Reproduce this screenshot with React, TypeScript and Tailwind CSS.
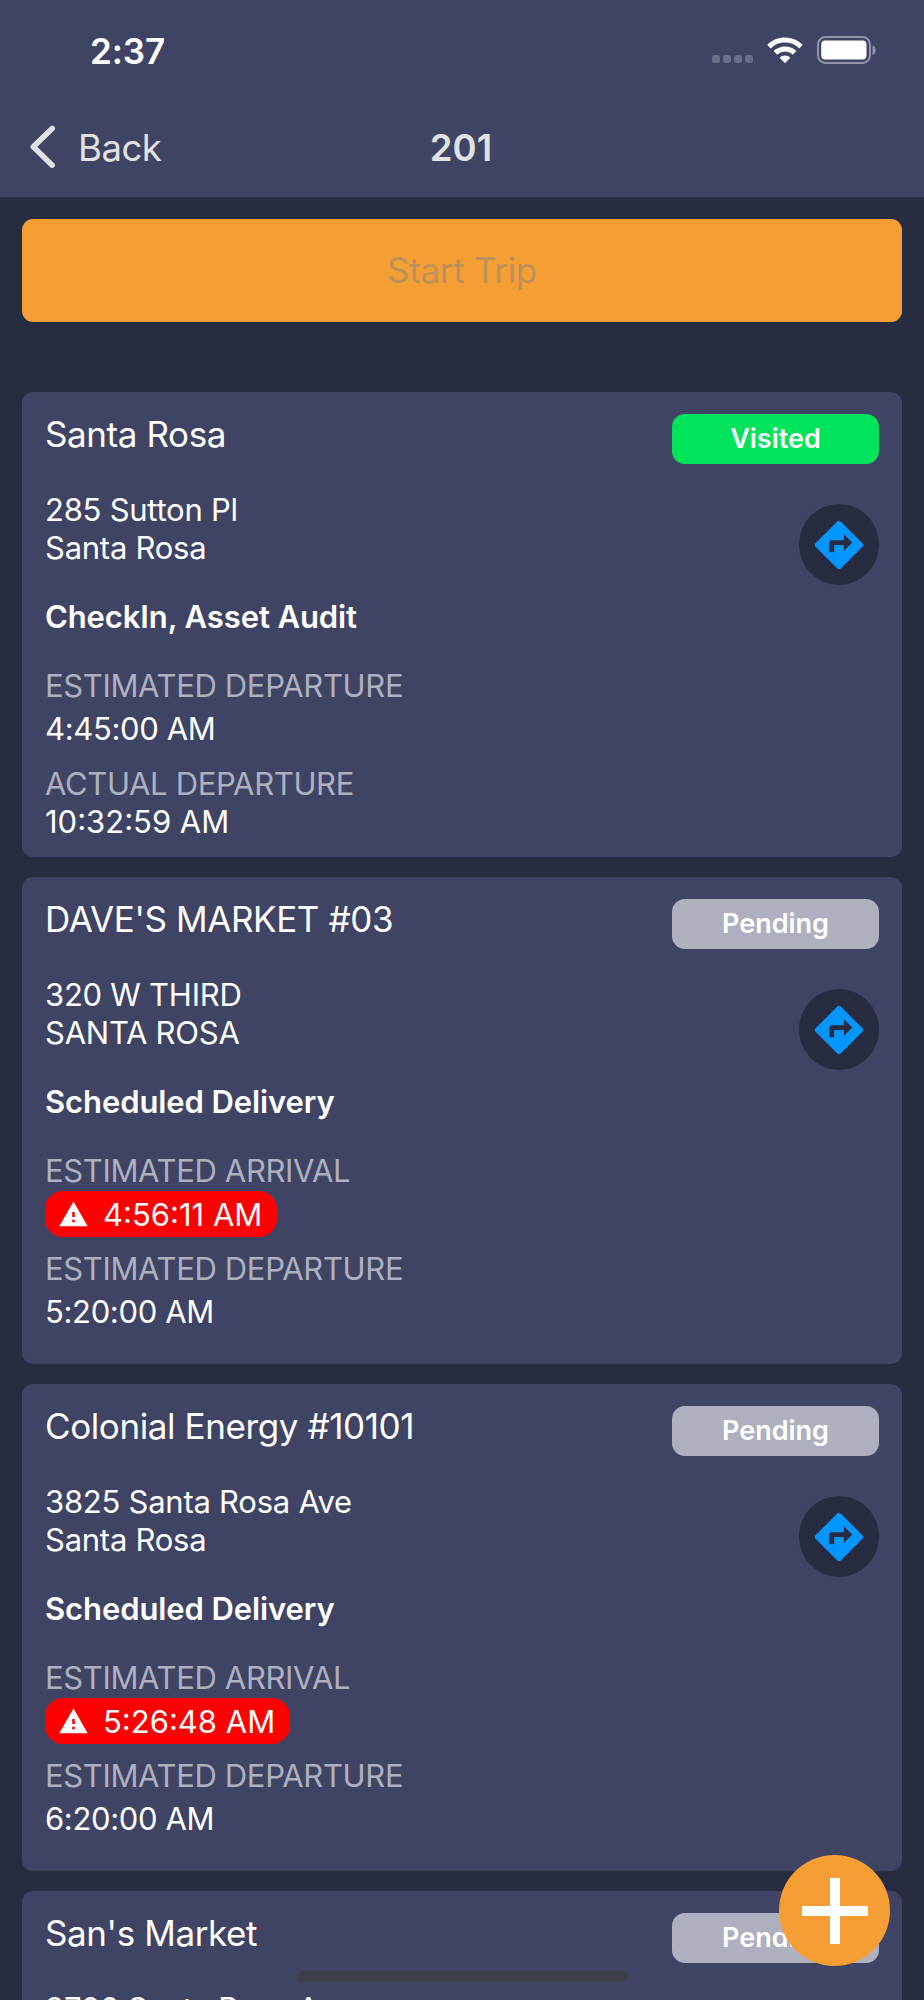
import { MdWarning } from "react-icons/md"

type Time = {
  label: string
  value: string
  late?: boolean
  tight?: boolean
}

type Stop = {
  name: string
  status: "Visited" | "Pending"
  address: string
  city: string
  tasks: string
  times: Time[]
  height: string
}

const stops: Stop[] = [
  {
    name: "Santa Rosa",
    status: "Visited",
    address: "285 Sutton Pl",
    city: "Santa Rosa",
    tasks: "CheckIn, Asset Audit",
    times: [
      { label: "ESTIMATED DEPARTURE", value: "4:45:00 AM" },
      { label: "ACTUAL DEPARTURE", value: "10:32:59 AM", tight: true },
    ],
    height: "h-[465px]",
  },
  {
    name: "DAVE'S MARKET #03",
    status: "Pending",
    address: "320 W THIRD",
    city: "SANTA ROSA",
    tasks: "Scheduled Delivery",
    times: [
      { label: "ESTIMATED ARRIVAL", value: "4:56:11 AM", late: true },
      { label: "ESTIMATED DEPARTURE", value: "5:20:00 AM" },
    ],
    height: "h-[487px]",
  },
  {
    name: "Colonial Energy #10101",
    status: "Pending",
    address: "3825 Santa Rosa Ave",
    city: "Santa Rosa",
    tasks: "Scheduled Delivery",
    times: [
      { label: "ESTIMATED ARRIVAL", value: "5:26:48 AM", late: true },
      { label: "ESTIMATED DEPARTURE", value: "6:20:00 AM" },
    ],
    height: "h-[487px]",
  },
  {
    name: "San's Market",
    status: "Pending",
    address: "3700 Santa Rosa Ave",
    city: "",
    tasks: "",
    times: [],
    height: "h-[487px]",
  },
]

function StatusBar() {
  return (
    <div className="flex h-[100px] items-center justify-between pr-[47px] pl-[90px]">
      <span className="pt-[2px] text-[35px] leading-none font-semibold tracking-[-0.1px] text-white">2:37</span>
      <div className="flex items-center">
        <div className="mt-[18px] flex gap-[3px]">
          {[0, 1, 2, 3].map((dot) => (
            <span key={dot} className="h-2 w-2 rounded-[2.5px] bg-[#6b6e8a]" />
          ))}
        </div>
        <svg className="ml-[14px]" width="36" height="27" viewBox="0 0 36 27" fill="white">
          <path d="M18 .4C11.300.4 5.200 3 .7 7.300c-.3.3-.3.700 0 1l2.500 2.600c.3.3.7.3 1 0A20 20 0 0 1 18 5.500a20 20 0 0 1 13.800 5.400c.3.3.7.3 1 0l2.500-2.600c.3-.3.3-.7 0-1A25.200 25.200 0 0 0 18 .4z" />
          <path d="M18 9.400c-4.200 0-8 1.600-10.900 4.200-.3.3-.3.700 0 1l2.600 2.600c.3.3.700.3 1 0A11 11 0 0 1 18 14.400c2.800 0 5.300 1 7.300 2.800.3.3.700.3 1 0l2.600-2.600c.3-.3.3-.700 0-1A16.200 16.200 0 0 0 18 9.400z" />
          <path d="M18 18.400c-1.900 0-3.600.7-4.900 1.800-.3.3-.3.700 0 1l4.400 4.500c.3.300.700.3 1 0l4.400-4.500c.3-.3.3-.700 0-1a7.500 7.500 0 0 0-4.900-1.800z" />
        </svg>
        <svg className="ml-[14px]" width="60" height="28" viewBox="0 0 60 28">
          <rect x="1" y="1" width="52" height="26" rx="7.500" fill="none" stroke="#9193a8" strokeWidth="2" />
          <rect x="4.200" y="4.600" width="45.300" height="19" rx="4" fill="white" />
          <path d="M55.500 9.500c2 .8 3.200 2.500 3.200 4.700s-1.200 3.900-3.200 4.700z" fill="#9193a8" />
        </svg>
      </div>
    </div>
  )
}

function NavBar() {
  return (
    <div className="grid h-[96px] grid-cols-3 items-center text-[#e1e1e1]">
      <div className="flex items-center pl-[29px]">
        <svg className="-mt-[2px]" width="28" height="44" viewBox="0 0 28 44" fill="none" stroke="#e1e1e1" strokeWidth="5.500" strokeLinecap="round" strokeLinejoin="round">
          <path d="M23.200 3.500 4.300 21.800 23.200 40.200" />
        </svg>
        <span className="ml-[21px] text-[36.500px] leading-none tracking-[-0.5px]">Back</span>
      </div>
      <h1 className="pr-[2px] text-center text-[36.500px] leading-none font-semibold">201</h1>
    </div>
  )
}

function DirectionsIcon() {
  return (
    <svg className="size-[58px]" viewBox="0 0 24 24" fill="#0496ff">
      <path d="M14 14.500V12h-4v3H8v-4a1 1 0 0 1 1-1h5V7.500l3.500 3.500M21.710 11.290l-9-9c-.39-.39-1.030-.39-1.420 0l-9 9c-.39.39-.39 1.030 0 1.420l9 9c.39.39 1.030.39 1.420 0l9-9c.39-.39.39-1.030 0-1.420z" fillRule="evenodd" />
    </svg>
  )
}

function StopTime({ time }: { time: Time }) {
  return (
    <div className="h-[98px]">
      <p className="text-[31px] leading-[38px] tracking-[-0.35px] text-[#aeb0c0]">{time.label}</p>
      {time.late ? (
        <div className="mt-px flex h-[46px] w-fit items-center rounded-[18px] bg-[#ff0000] pr-[15px] pl-[13px]">
          <MdWarning className="size-[31px]" />
          <span className="ml-[14px] text-[31px] leading-none">{time.value}</span>
        </div>
      ) : (
        <p className={`text-[31px] ${time.tight ? "leading-[38px]" : "leading-[47px] tracking-[-0.35px]"}`}>
          {time.value}
        </p>
      )}
    </div>
  )
}

function StopCard({ stop }: { stop: Stop }) {
  return (
    <article className={`flex shrink-0 justify-between rounded-[11px] bg-[#3f4464] px-[23px] pt-[22px] text-white ${stop.height}`}>
      <div className="whitespace-nowrap">
        <h2 className="-mt-px text-[35px] leading-[42px] tracking-[-0.4px]">{stop.name}</h2>
        <div className="mt-[36px] text-[31px] leading-[38px] tracking-[-0.25px]">
          <p>{stop.address}</p>
          {stop.city && <p>{stop.city}</p>}
        </div>
        {stop.tasks && (
          <p className="mt-[31px] mb-[31px] text-[31px] leading-[38px] font-semibold tracking-[-0.1px]">{stop.tasks}</p>
        )}
        {stop.times.map((time) => (
          <StopTime key={time.label} time={time} />
        ))}
      </div>
      <div className="flex flex-col items-end">
        <span
          className={`flex h-[50px] w-[207px] items-center justify-center rounded-[13px] pt-px text-[27px] font-semibold ${
            stop.status === "Visited" ? "bg-[#00e45b]" : "bg-[#aeb0c0]"
          }`}
        >
          {stop.status}
        </span>
        <button className="mt-10 flex h-[81px] w-[80px] items-center justify-center rounded-full bg-[#282c40]" aria-label="Directions">
          <DirectionsIcon />
        </button>
      </div>
    </article>
  )
}

export default function App() {
  return (
    <div className="relative flex h-[2000px] w-[924px] flex-col overflow-hidden bg-[#282c40] font-[Inter,sans-serif]">
      <header className="h-[197px] shrink-0 bg-[#3f4464]">
        <StatusBar />
        <NavBar />
      </header>

      <main className="flex flex-col px-[22px] pt-[22px]">
        <button className="h-[103px] shrink-0 rounded-[11px] bg-[#f59e33] text-[35px] tracking-[-0.3px] text-[#bd925a]" disabled>
          Start Trip
        </button>
        <div className="mt-[70px] flex flex-col gap-[20px]">
          {stops.map((stop) => (
            <StopCard key={stop.name} stop={stop} />
          ))}
        </div>
      </main>

      <button className="absolute right-[34px] bottom-[34px] flex size-[111px] items-center justify-center rounded-full bg-[#f59e33]" aria-label="Add stop">
        <svg width="66" height="66" viewBox="0 0 66 66" fill="white">
          <path d="M28 0h10v28h28v10H38v28H28V38H0V28h28z" />
        </svg>
      </button>
      <div className="absolute bottom-[18px] left-[297px] h-[11px] w-[330px] rounded-full bg-[#3e3f4b]" />
    </div>
  )
}
